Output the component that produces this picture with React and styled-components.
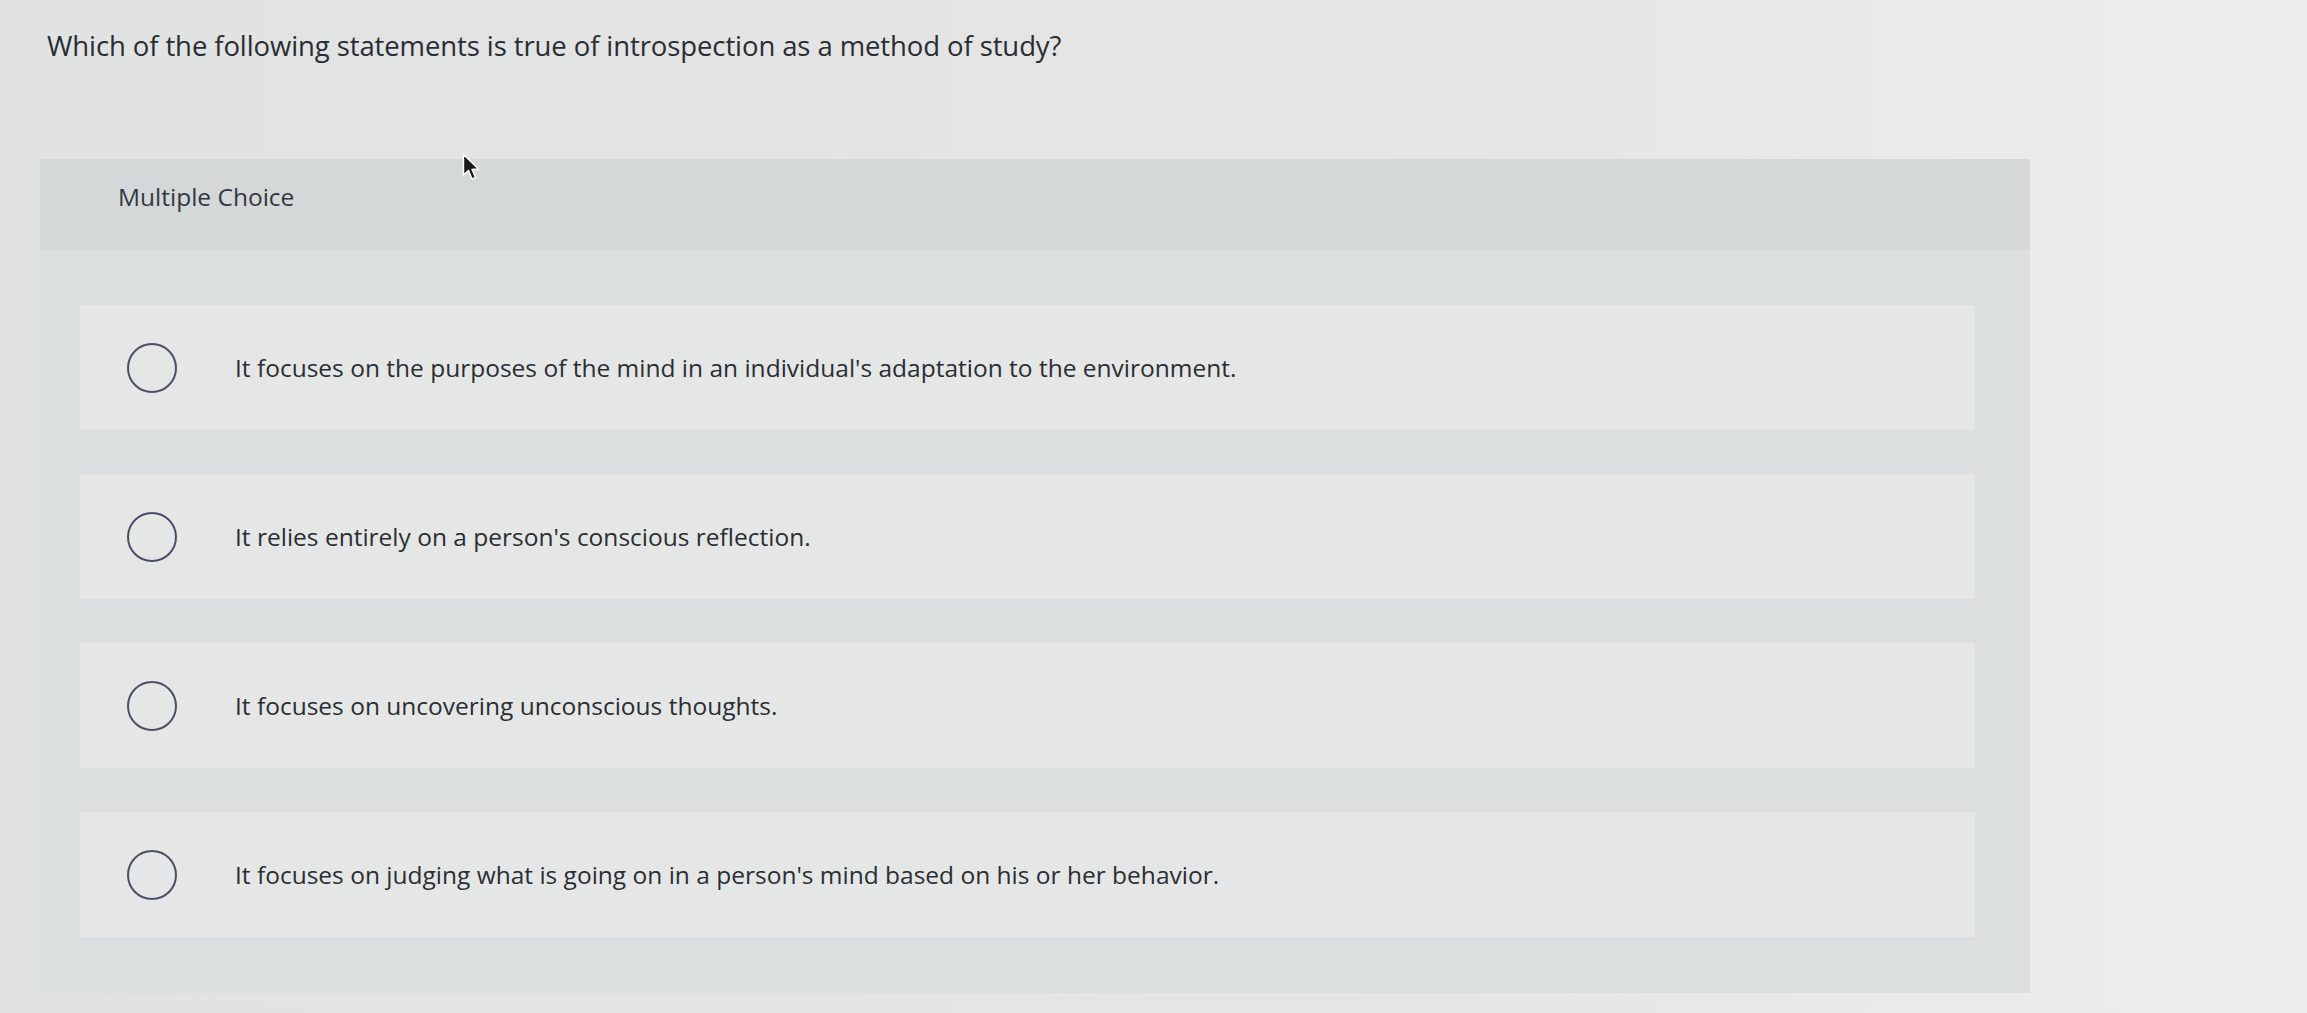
import React from 'react';
import styled, { createGlobalStyle } from 'styled-components';

//---------------------- DATA ------------------------

const question = 'Which of the following statements is true of introspection as a method of study?';

const choices = [
  "It focuses on the purposes of the mind in an individual's adaptation to the environment.",
  "It relies entirely on a person's conscious reflection.",
  'It focuses on uncovering unconscious thoughts.',
  "It focuses on judging what is going on in a person's mind based on his or her behavior.",
];

//---------------------- APP ------------------------

const App = () => {
  const [selected, setSelected] = React.useState(null);

  return (
    <>
      <GlobalStyle />
      <Page>
        <Question>{question}</Question>

        <Panel>
          <PanelHeader>
            <HeaderLabel>Multiple Choice</HeaderLabel>
            <Cursor viewBox="0 0 18 28">
              <path d="M1.5 1.5 L1.5 22 L6.5 17.5 L10 26 L13.5 24.5 L10 16.5 L16.5 16 Z" fill="#1a1a1a" stroke="#fff" strokeWidth="1.4" strokeLinejoin="round" />
            </Cursor>
          </PanelHeader>

          <Choices>
            {choices.map((text, index) => (
              <Choice key={index} onClick={() => setSelected(index)}>
                <Radio checked={selected === index} />
                <ChoiceText>{text}</ChoiceText>
              </Choice>
            ))}
          </Choices>
        </Panel>
      </Page>
    </>
  );
};

//---------------------- STYLE ----------------------

const GlobalStyle = createGlobalStyle`
  html, body {
    margin: 0;
    padding: 0;
  }
  body {
    font-family: "Open Sans", "Liberation Sans", Arial, sans-serif;
    color: #2b2e33;
    background: linear-gradient(to right, #e1e3e2 0%, #e4e5e4 60%, #ebebe9 88%, #eeedeb 100%);
  }
`;

const Page = styled.div`
  width: 2307px;
  height: 1013px;
  box-sizing: border-box;
  padding: 27px 0 0 40px;
  overflow: hidden;
`;

const Question = styled.h1`
  margin: 0 0 0 7px;
  font-size: 27.5px;
  line-height: 38px;
  font-weight: 400;
  letter-spacing: -0.1px;
  color: #2a2d32;
`;

const Panel = styled.section`
  margin-top: 94px;
  width: 1990px;
  background: #dcdfdf;
`;

const PanelHeader = styled.div`
  position: relative;
  height: 91px;
  box-sizing: border-box;
  padding: 21px 0 0 78px;
  background: #d4d8d9;
`;

const HeaderLabel = styled.div`
  font-size: 24.5px;
  line-height: 34px;
  color: #353840;
`;

const Cursor = styled.svg`
  position: absolute;
  left: 422px;
  top: -6px;
  width: 18px;
  height: 28px;
`;

const Choices = styled.div`
  display: flex;
  flex-direction: column;
  gap: 44px;
  padding: 55px 55px 56px 40px;
`;

const Choice = styled.div`
  display: flex;
  align-items: center;
  height: 125px;
  padding-left: 47px;
  background: #e5e7e6;
  cursor: pointer;
`;

const Radio = styled.span`
  flex: none;
  width: 50px;
  height: 50px;
  box-sizing: border-box;
  border-radius: 50%;
  border: 2.5px solid #4b4f66;
  background: ${props => (props.checked ? 'radial-gradient(circle, #4b4f66 0 9px, transparent 10px)' : 'transparent')};
`;

const ChoiceText = styled.span`
  margin-left: 58px;
  font-size: 24.5px;
  line-height: 34px;
  color: #2b2e33;
`;

//------------------- EXPORTS --------------------
export default App;
